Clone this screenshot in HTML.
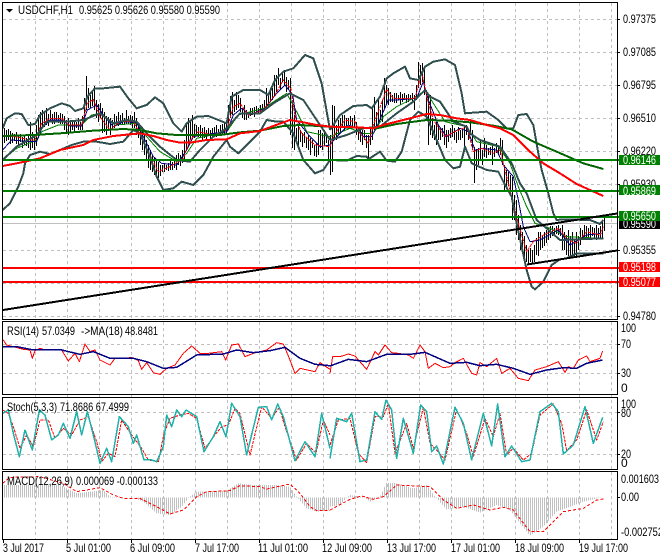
<!DOCTYPE html>
<html><head><meta charset="utf-8"><title>USDCHF,H1</title>
<style>
html,body{margin:0;padding:0;background:#fff;width:660px;height:560px;overflow:hidden}
svg{display:block}
text{font-family:"Liberation Sans",sans-serif;font-size:12px;fill:#000}
.l{fill:none;vector-effect:non-scaling-stroke}
polyline{fill:none;vector-effect:non-scaling-stroke;stroke-linejoin:round}
</style></head><body>
<svg width="660" height="560" viewBox="0 0 660 560" xmlns="http://www.w3.org/2000/svg">
<defs>
<pattern id="st" patternUnits="userSpaceOnUse" width="6" height="6"><rect width="3" height="6" fill="#c0c0c0"/></pattern>
</defs>
<rect width="660" height="560" fill="#fff"/>
<!-- grid -->
<g stroke="#c0c0c0" stroke-width="1" stroke-dasharray="3 3" fill="none" shape-rendering="crispEdges">
<path d="M3 19.5H617M3 52.5H617M3 85.5H617M3 118.5H617M3 151.5H617M3 184.5H617M3 250.5H617M3 283.5H617M3 316.5H617"/>
<path d="M3 344.5H617M3 373.5H617M3 412.5H617M3 454.5H617"/>
<path d="M35.5 3V319M67.5 3V319M99.5 3V319M131.5 3V319M163.5 3V319M195.5 3V319M227.5 3V319M259.5 3V319M291.5 3V319M323.5 3V319M355.5 3V319M387.5 3V319M419.5 3V319M451.5 3V319M483.5 3V319M515.5 3V319M547.5 3V319M579.5 3V319M611.5 3V319"/>
<path d="M35.5 322V539M67.5 322V539M99.5 322V539M131.5 322V539M163.5 322V539M195.5 322V539M227.5 322V539M259.5 322V539M291.5 322V539M323.5 322V539M355.5 322V539M387.5 322V539M419.5 322V539M451.5 322V539M483.5 322V539M515.5 322V539M547.5 322V539M579.5 322V539M611.5 322V539"/>
</g>
<!-- price line -->
<path d="M3 223.5H617" stroke="#c0c0c0" stroke-width="1" shape-rendering="crispEdges"/>
<!-- bars -->
<path transform="translate(.5 0)" stroke="#000" stroke-width="1" fill="none" shape-rendering="crispEdges" d="M4 128V143M6 130V141M8 129V140M10 131V144M12 133V143M14 134V141M16 132V144M18 136V146M20 134V142M22 137V148M24 136V145M26 138V146M28 136V148M30 122V150M32 132V148M34 136V150M36 125V146M38 115V138M40 112V132M42 110V128M44 113V127M46 108V125M48 114V126M50 110V122M52 114V124M54 112V124M56 112V122M58 115V123M60 113V124M62 114V124M64 116V130M66 120V132M68 118V135M70 120V133M72 122V130M74 120V133M76 122V128M78 118V130M80 122V130M82 116V130M84 98V122M86 76V110M88 88V108M90 95V108M92 92V106M94 86V110M96 100V118M98 104V122M100 103V118M102 108V133M104 112V132M106 116V135M108 117V130M110 118V135M112 120V130M114 114V128M116 116V124M118 112V126M120 115V125M122 113V124M124 118V125M126 110V124M128 116V124M130 115V125M132 116V128M134 112V128M136 118V135M138 124V138M140 128V145M142 130V150M144 135V155M146 140V160M148 145V168M150 150V170M152 155V172M154 158V175M156 160V176M158 162V178M160 165V176M162 165V172M164 163V172M166 165V170M168 163V171M170 160V170M172 162V170M174 160V168M176 155V170M178 153V165M180 155V166M182 150V163M184 140V160M186 125V150M188 118V145M190 122V140M192 115V137M194 124V138M196 125V135M198 127V137M200 125V137M202 128V140M204 127V138M206 130V140M208 128V135M210 130V140M212 128V137M214 127V135M216 125V137M218 129V135M220 125V135M222 124V134M224 123V135M226 120V135M228 105V130M230 96V118M232 92V115M234 100V112M236 92V110M238 95V108M240 98V112M242 108V118M244 105V120M246 110V120M248 112V118M250 108V116M252 108V115M254 107V117M256 106V112M258 108V114M260 105V112M262 104V112M264 100V110M266 88V106M268 95V105M270 90V102M272 88V100M274 75V96M276 75V92M278 68V85M280 78V90M282 72V82M284 70V85M286 77V92M288 80V90M290 78V135M292 100V148M294 115V150M296 128V140M298 125V145M300 130V142M302 133V147M304 132V143M306 138V148M308 135V150M310 138V155M312 140V148M314 145V156M316 143V157M318 130V155M320 130V148M322 133V150M324 130V146M326 135V143M328 140V160M330 135V175M332 105V172M334 106V140M336 125V140M338 120V135M340 118V132M342 115V128M344 115V130M346 118V128M348 118V125M350 116V125M352 118V128M354 115V128M356 122V135M358 127V140M360 130V142M362 130V145M364 130V140M366 135V148M368 135V160M370 128V145M372 108V140M374 97V130M376 112V128M378 98V125M380 110V120M382 100V122M384 78V108M386 85V105M388 88V105M390 92V102M392 95V102M394 93V103M396 93V103M398 95V100M400 92V105M402 94V102M404 93V100M406 95V103M408 94V102M410 95V100M412 93V102M414 95V110M416 85V100M418 62V88M420 65V85M422 63V82M424 66V95M426 90V120M428 95V145M430 95V135M432 118V138M434 125V140M436 122V145M438 125V140M440 128V140M442 128V137M444 125V145M446 130V148M448 130V142M450 128V138M452 125V137M454 128V140M456 132V143M458 127V140M460 130V140M462 128V138M464 125V150M466 125V135M468 130V140M470 120V135M472 130V150M474 147V183M476 150V170M478 148V165M480 140V160M482 150V165M484 138V157M486 145V158M488 148V155M490 147V155M492 145V165M494 148V157M496 143V153M498 145V155M500 138V155M502 140V165M504 165V192M506 170V188M508 172V186M510 175V195M512 177V220M514 195V220M516 200V235M518 215V240M520 225V250M522 232V253M524 236V258M526 245V262M528 250V265M530 248V262M532 250V263M534 245V262M536 238V255M538 232V256M540 232V250M542 235V248M544 232V246M546 230V243M548 228V240M550 226V238M552 226V236M554 228V235M556 226V234M558 225V235M560 228V236M562 225V250M564 232V250M566 235V255M568 230V256M570 236V258M572 232V258M574 240V256M576 232V256M578 236V250M580 228V245M582 230V240M584 225V238M586 226V240M588 228V238M590 225V240M592 227V236M594 228V238M596 225V240M598 228V238M600 226V238M602 222V238M604 218V231"/>

<!-- main left half, zoom coordinates -->
<g transform="scale(.33333)" shape-rendering="crispEdges">
<polyline stroke="#008000" stroke-width="1" points="8,480 50,445 110,420 125,395 175,375 245,375 275,345 300,340 345,375 410,370 440,410 480,455 530,485 560,460 590,415 680,395 715,345 790,325 860,280 890,335 920,395 990,410"/>
<polyline stroke="#000080" stroke-width="1" points="8,450 35,420 90,425 110,425 125,385 150,360 185,360 210,378 245,378 262,330 290,315 310,345 340,380 370,365 410,368 430,410 460,470 485,490 530,495 560,450 580,410 620,403 680,395 700,345 725,325 750,345 795,325 830,280 855,255 878,285 890,360 930,410 960,440 990,435"/>
<polyline stroke="#ff0000" stroke-width="1" stroke-dasharray="3 1" points="8,410 45,410 90,420 105,420 125,370 150,355 185,355 205,375 245,375 262,310 280,298 300,350 330,390 360,365 400,365 425,410 450,465 475,515 510,500 550,475 570,420 595,395 640,405 680,390 700,320 720,310 745,345 790,330 825,285 850,240 872,265 885,350 905,400 945,435 990,440"/>
<polyline stroke="#2f4f4f" stroke-width="2" points="8,385 20,355 45,340 65,342 85,375 105,372 120,345 150,325 185,310 210,318 225,333 250,325 262,290 285,265 310,265 360,260 385,295 410,325 440,315 465,292 490,310 520,370 545,395 560,370 590,350 625,348 660,362 680,370 695,290 730,270 780,270 805,285 825,240 850,215 880,205 915,165 940,175 965,250 990,390"/>
<polyline stroke="#2f4f4f" stroke-width="2" points="8,480 50,440 110,405 140,365 200,365 250,360 300,340 340,370 380,360 410,365 440,400 480,440 530,480 570,485 600,450 640,410 680,385 720,340 780,340 820,310 870,280 910,300 990,420"/>
<polyline stroke="#2f4f4f" stroke-width="2" points="8,630 30,610 55,560 70,520 75,490 90,465 120,455 150,462 180,450 215,435 250,425 290,425 330,432 370,425 400,390 420,400 450,470 470,530 490,570 520,565 545,545 580,555 610,525 640,470 680,420 690,440 715,460 740,435 780,395 800,360 830,365 850,365 880,400 910,480 945,520 970,510 990,480"/>
<polyline stroke="#006400" stroke-width="2" points="8,408 100,405 180,400 280,392 370,387 420,390 470,400 530,405 590,405 660,405 720,397 780,392 850,378 900,375 990,380"/>
<polyline stroke="#ff0000" stroke-width="2" points="8,498 50,490 120,475 180,450 250,435 280,420 340,408 420,400 460,408 500,420 540,428 570,428 620,420 680,418 720,400 780,393 820,378 870,360 900,365 950,375 990,380"/>
</g>
<!-- main right half -->
<g transform="translate(330,0) scale(.33333)" shape-rendering="crispEdges">
<polyline stroke="#008000" stroke-width="1" points="0,410 60,385 100,400 130,400 160,350 200,320 260,290 285,270 310,310 345,365 410,380 440,425 505,440 540,490 565,560 590,620 600,640 615,670 660,685 710,710 815,715"/>
<polyline stroke="#000080" stroke-width="1" points="0,435 20,410 55,375 85,385 100,410 125,410 145,370 175,300 200,300 260,295 280,245 295,300 325,375 350,410 390,385 415,395 435,450 455,445 500,450 520,495 550,530 565,600 580,680 600,725 630,720 685,690 720,735 770,705 815,700"/>
<polyline stroke="#ff0000" stroke-width="1" stroke-dasharray="3 1" points="0,440 15,400 45,360 75,365 90,400 115,430 130,375 170,268 190,295 255,295 275,215 290,290 310,360 345,410 375,395 410,380 430,455 455,445 490,460 510,450 525,510 550,610 565,670 590,755 610,725 640,705 685,685 715,720 740,730 770,695 810,705 820,680"/>
<polyline stroke="#2f4f4f" stroke-width="2" points="0,390 30,345 70,318 110,315 125,325 150,290 170,235 190,220 225,200 240,235 265,240 285,200 310,185 345,178 375,195 395,280 405,340 430,338 470,335 505,360 530,385 550,385 565,345 590,342 610,375 625,460 635,510 655,580 670,640 680,660 700,658 780,660 810,672 820,660"/>
<polyline stroke="#2f4f4f" stroke-width="2" points="0,420 50,405 100,385 150,380 200,340 250,305 285,270 300,290 330,305 370,365 410,380 420,400 450,420 510,440 545,490 570,550 590,580 620,660 650,685 690,720 820,715"/>
<polyline stroke="#2f4f4f" stroke-width="2" points="0,480 50,482 80,468 110,470 115,478 150,455 170,482 195,485 215,455 240,360 265,335 290,350 320,420 345,480 370,505 390,500 405,440 425,490 470,510 505,515 520,545 545,590 560,670 575,740 590,810 605,860 615,868 640,845 660,805 665,795 690,778 710,775 740,760 820,760"/>
<polyline stroke="#006400" stroke-width="2" points="0,380 80,383 140,385 200,372 290,360 360,362 420,367 490,377 545,388 610,425 680,455 760,490 820,507"/>
<polyline stroke="#ff0000" stroke-width="2" points="0,380 80,382 130,385 160,375 220,360 290,342 330,345 380,355 420,360 470,375 510,385 550,405 600,455 640,490 690,520 740,552 780,570 820,588"/>
</g>
<!-- horizontal lines and trend lines -->
<g shape-rendering="crispEdges" fill="none">
<path d="M3 160H619M3 191H619M3 217H619" stroke="#008000" stroke-width="2"/>
<path d="M3 268H619M3 282H619" stroke="#ff0000" stroke-width="2"/>
<path d="M3 310L617 213.5M527 264.5L617 250.5" stroke="#000" stroke-width="2"/>
</g>

<!-- RSI -->
<g transform="translate(0,320) scale(.33333)" shape-rendering="crispEdges">
<polyline stroke="#ff0000" stroke-width="1" points="8,58 20,75 40,80 70,88 90,90 97,115 105,92 120,85 135,90 150,88 185,90 205,123 225,100 238,125 255,72 270,95 285,90 300,120 330,135 345,115 375,115 395,112 415,122 425,148 440,128 460,158 480,163 500,145 525,135 550,100 575,78 600,100 625,100 665,95 677,120 695,75 715,72 735,110 760,100 800,90 830,68 850,72 870,120 885,160 900,145 945,155 960,128 990,148"/>
<polyline stroke="#000080" stroke-width="1.5" points="8,80 50,80 100,90 185,90 240,103 280,95 330,115 400,115 440,125 490,145 530,142 590,105 670,102 710,90 760,98 810,92 855,82 900,115 945,133 990,137"/>
<polyline stroke="#ff0000" stroke-width="1" stroke-dasharray="3 1" points="8,270 25,280 40,320 60,385 80,345 100,380 120,300 145,300 165,355 190,325 215,345 240,300 265,290 290,365 305,425 325,400 345,410 365,300 395,345 425,385 445,420 475,425 492,340 510,295 540,285 565,280 590,295 615,385 645,345 665,320 685,315 705,265 720,280 750,405 785,260 815,295 838,262 855,320 890,420 920,370 948,400 970,300 990,345"/>
<polyline stroke="#20b2aa" stroke-width="1.5" points="8,280 25,270 40,340 58,410 75,330 97,390 118,270 135,285 155,360 175,345 190,310 210,355 230,275 245,345 262,275 280,345 300,430 320,385 335,425 358,290 385,320 400,370 410,345 432,420 455,420 470,425 490,380 500,285 515,320 530,270 545,290 558,270 590,290 612,395 640,350 660,305 678,350 695,250 720,290 740,405 775,262 800,260 815,300 833,252 850,290 885,422 915,365 945,410 965,280 990,385"/>
<polygon fill="url(#st)" points="8,532 8,495 100,495 180,495 200,505 230,520 270,515 310,510 330,530 400,533 430,545 470,580 510,585 545,560 570,530 590,515 680,512 715,490 760,495 830,495 870,500 890,530 920,565 950,575 990,570 990,532"/>
<polyline stroke="#ff0000" stroke-width="1" stroke-dasharray="3 2" points="8,490 30,472 120,470 190,490 230,515 300,503 340,525 370,535 420,535 470,560 510,582 550,570 590,530 620,515 690,512 720,497 780,500 800,507 870,492 900,520 930,560 950,572 990,572"/>
</g>
<g transform="translate(330,320) scale(.33333)" shape-rendering="crispEdges">
<polyline stroke="#ff0000" stroke-width="1" points="0,160 8,110 30,110 55,102 75,108 110,148 135,95 145,105 165,75 185,98 205,100 235,105 250,115 270,75 285,95 295,145 315,130 340,143 360,140 375,128 400,115 425,160 440,165 450,128 470,140 500,115 515,160 540,145 565,175 595,182 615,150 650,140 685,125 705,157 715,140 730,145 745,120 770,108 780,125 810,115 818,93"/>
<polyline stroke="#000080" stroke-width="1.5" points="0,138 55,118 110,125 170,103 250,102 285,97 360,130 410,127 450,137 500,133 550,145 600,163 650,150 700,143 740,145 770,130 818,120"/>
<polyline stroke="#ff0000" stroke-width="1" stroke-dasharray="3 1" points="0,375 25,300 60,295 85,400 110,428 135,290 160,290 175,250 195,400 215,350 230,310 250,385 280,262 300,370 320,390 345,420 380,268 410,340 430,410 465,295 490,350 510,280 530,405 550,385 580,420 605,400 630,285 670,252 695,310 710,392 740,360 770,270 800,360 820,305"/>
<polyline stroke="#20b2aa" stroke-width="1.5" points="0,415 20,295 50,305 65,280 90,425 110,420 135,275 155,298 168,240 185,270 200,415 220,295 250,400 272,255 290,275 305,395 320,378 340,432 375,262 400,310 425,420 460,280 485,378 503,252 525,410 545,378 575,425 600,420 630,275 665,250 685,275 700,402 730,375 765,260 790,370 818,292"/>
<polygon fill="url(#st)" points="0,532 0,560 30,555 60,525 100,530 120,545 150,530 170,488 200,490 250,505 290,495 315,530 350,568 400,560 450,578 500,555 540,570 570,610 600,647 640,620 680,575 720,560 760,545 800,535 820,532"/>
<polyline stroke="#ff0000" stroke-width="1" stroke-dasharray="3 2" points="0,570 60,538 95,528 130,538 160,530 200,495 240,497 300,500 340,540 380,565 430,555 480,570 520,562 550,570 600,635 640,635 700,575 760,565 800,540 820,537"/>
</g>

<!-- frames -->
<g fill="none" stroke="#000" stroke-width="1" shape-rendering="crispEdges">
<path d="M2.5 2.5H617.5V319.5H2.5Z"/>
<path d="M2.5 321.5H617.5V394.5H2.5Z"/>
<path d="M2.5 397.5H617.5V469.5H2.5Z"/>
<path d="M2.5 471.5H617.5V539.5H2.5Z"/>
<path d="M617 19.5h3M617 52.5h3M617 85.5h3M617 118.5h3M617 151.5h3M617 184.5h3M617 250.5h3M617 316.5h3M617 344.5h3M617 373.5h3M617 412.5h3M617 454.5h3M617 497.5h3"/>
<path d="M3.5 540v3M67.5 540v3M131.5 540v3M195.5 540v3M259.5 540v3M323.5 540v3M387.5 540v3M451.5 540v3M515.5 540v3M579.5 540v3"/>
</g>

<!-- axis labels -->
<text x="623" y="23" textLength="33" lengthAdjust="spacingAndGlyphs">0.97375</text>
<text x="623" y="56" textLength="33" lengthAdjust="spacingAndGlyphs">0.97085</text>
<text x="623" y="89" textLength="33" lengthAdjust="spacingAndGlyphs">0.96795</text>
<text x="623" y="122" textLength="33" lengthAdjust="spacingAndGlyphs">0.96510</text>
<text x="623" y="155" textLength="33" lengthAdjust="spacingAndGlyphs">0.96220</text>
<text x="623" y="188" textLength="33" lengthAdjust="spacingAndGlyphs">0.95930</text>
<text x="623" y="254" textLength="33" lengthAdjust="spacingAndGlyphs">0.95355</text>
<text x="623" y="320" textLength="33" lengthAdjust="spacingAndGlyphs">0.94780</text>

<rect x="619" y="221" width="41" height="8" fill="#000"/>
<text x="623" y="228" textLength="33" lengthAdjust="spacingAndGlyphs" style="fill:#fff">0.95590</text>
<rect x="619" y="155" width="41" height="10" fill="#008000"/>
<text x="623" y="164" textLength="33" lengthAdjust="spacingAndGlyphs" style="fill:#fff">0.96146</text>
<rect x="619" y="185" width="41" height="10" fill="#008000"/>
<text x="623" y="195" textLength="33" lengthAdjust="spacingAndGlyphs" style="fill:#fff">0.95869</text>
<rect x="619" y="211" width="41" height="10" fill="#008000"/>
<text x="623" y="220" textLength="33" lengthAdjust="spacingAndGlyphs" style="fill:#fff">0.95650</text>
<rect x="619" y="262" width="41" height="10" fill="#ff0000"/>
<text x="623" y="271" textLength="33" lengthAdjust="spacingAndGlyphs" style="fill:#fff">0.95198</text>
<rect x="619" y="277" width="41" height="10" fill="#ff0000"/>
<text x="623" y="286" textLength="33" lengthAdjust="spacingAndGlyphs" style="fill:#fff">0.95077</text>

<text x="621" y="332" textLength="15" lengthAdjust="spacingAndGlyphs">100</text>
<text x="621" y="348" textLength="10" lengthAdjust="spacingAndGlyphs">70</text>
<text x="621" y="377" textLength="10" lengthAdjust="spacingAndGlyphs">30</text>
<text x="621" y="392">0</text>
<text x="621" y="408" textLength="15" lengthAdjust="spacingAndGlyphs">100</text>
<text x="621" y="417" textLength="10" lengthAdjust="spacingAndGlyphs">80</text>
<text x="621" y="458" textLength="10" lengthAdjust="spacingAndGlyphs">20</text>
<text x="621" y="467">0</text>
<text x="621" y="483" textLength="38" lengthAdjust="spacingAndGlyphs">0.001603</text>
<text x="621" y="501" textLength="18" lengthAdjust="spacingAndGlyphs">0.00</text>
<text x="621" y="536" textLength="42" lengthAdjust="spacingAndGlyphs">-0.002752</text>

<!-- legends -->
<path d="M6 9h7l-3.500 3.500z" fill="#000"/>
<text x="18" y="14" textLength="55" lengthAdjust="spacingAndGlyphs">USDCHF,H1</text>
<text x="79" y="14" textLength="141" lengthAdjust="spacingAndGlyphs">0.95625 0.95626 0.95580 0.95590</text>
<text x="7" y="335" textLength="32" lengthAdjust="spacingAndGlyphs">RSI(14)</text>
<text x="42" y="335" textLength="33" lengthAdjust="spacingAndGlyphs">57.0349</text>
<text x="81" y="335" textLength="42" lengthAdjust="spacingAndGlyphs">-&gt;MA(18)</text>
<text x="125" y="335" textLength="33" lengthAdjust="spacingAndGlyphs">48.8481</text>
<text x="7" y="411" textLength="50" lengthAdjust="spacingAndGlyphs">Stoch(5,3,3)</text>
<text x="60" y="411" textLength="69" lengthAdjust="spacingAndGlyphs">71.8686 67.4999</text>
<text x="7" y="485" textLength="66" lengthAdjust="spacingAndGlyphs">MACD(12,26,9)</text>
<text x="76" y="485" textLength="82" lengthAdjust="spacingAndGlyphs">0.000069 -0.000133</text>

<!-- time axis -->
<text x="3" y="552" textLength="41" lengthAdjust="spacingAndGlyphs">3 Jul 2017</text>
<text x="66" y="552" textLength="45" lengthAdjust="spacingAndGlyphs">5 Jul 01:00</text>
<text x="130" y="552" textLength="45" lengthAdjust="spacingAndGlyphs">6 Jul 09:00</text>
<text x="195" y="552" textLength="44" lengthAdjust="spacingAndGlyphs">7 Jul 17:00</text>
<text x="258" y="552" textLength="50" lengthAdjust="spacingAndGlyphs">11 Jul 01:00</text>
<text x="322" y="552" textLength="50" lengthAdjust="spacingAndGlyphs">12 Jul 09:00</text>
<text x="387" y="552" textLength="49" lengthAdjust="spacingAndGlyphs">13 Jul 17:00</text>
<text x="451" y="552" textLength="49" lengthAdjust="spacingAndGlyphs">17 Jul 01:00</text>
<text x="515" y="552" textLength="49" lengthAdjust="spacingAndGlyphs">18 Jul 09:00</text>
<text x="579" y="552" textLength="49" lengthAdjust="spacingAndGlyphs">19 Jul 17:00</text>
</svg>
</body></html>
